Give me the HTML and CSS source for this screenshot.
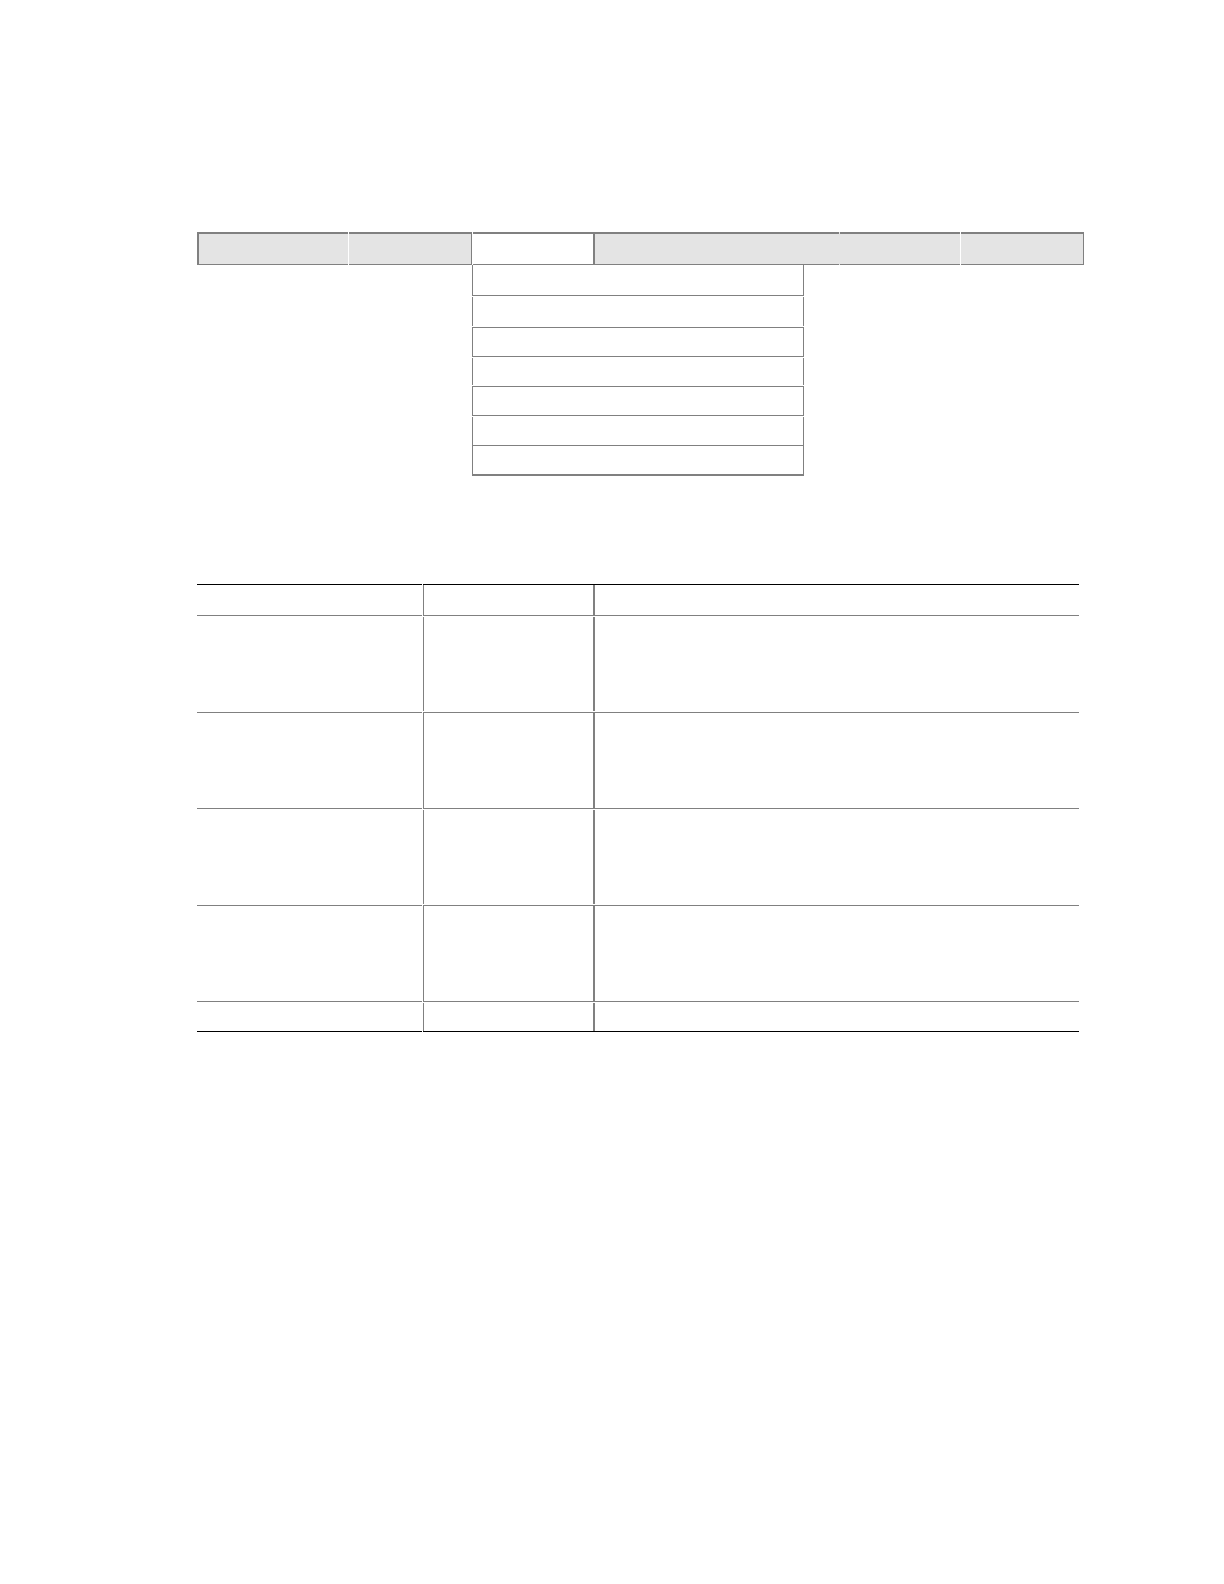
FILE: index.html
```html
<!DOCTYPE html>
<html lang="en">
<head>
<meta charset="utf-8">
<title>Menu</title>
<link rel="stylesheet" href="styles.css">
</head>
<body>
<main class="page">
  <nav class="bar">
    <div class="tab tab-first"></div>
    <div class="tab tab-closed tab-gap"></div>
    <div class="tab tab-open tab-gap"></div>
    <div class="tab tab-start"></div>
    <div class="tab tab-joined"></div>
    <div class="tab tab-closed tab-gap"></div>
  </nav>
  <ul class="menu">
    <li class="item item-top"></li>
    <li class="item item-plain"></li>
    <li class="item item-boxed"></li>
    <li class="item item-plain item-short"></li>
    <li class="item item-boxed"></li>
    <li class="item item-plain"></li>
    <li class="item item-last"></li>
  </ul>
  <table class="grid">
    <colgroup><col class="col-name"><col class="col-key"><col></colgroup>
    <thead>
      <tr class="row-head"><td></td><td></td><td></td></tr>
    </thead>
    <tbody>
      <tr class="row-plain"><td></td><td></td><td></td></tr>
      <tr class="row-ruled"><td></td><td></td><td></td></tr>
      <tr class="row-plain"><td></td><td></td><td></td></tr>
      <tr class="row-ruled"><td></td><td></td><td></td></tr>
      <tr class="row-last"><td></td><td></td><td></td></tr>
    </tbody>
  </table>
</main>
</body>
</html>
```
FILE: styles.css
```css
:root {
  --line: #808080;
  --fill: #e4e4e4;
}

* {
  box-sizing: border-box;
}

body {
  margin: 0;
  background: #fff;
  font-family: "Liberation Sans", sans-serif;
}

.page {
  min-height: 100vh;
  padding: 232px 140px 0 197px;
}

/* Menu bar */
.bar {
  display: grid;
  grid-template-columns: 151fr 124fr 121fr 246fr 121fr 124fr;
}

.tab {
  height: 33px;
  background: var(--fill);
  box-shadow: inset 0 2px var(--line), inset 0 -1px var(--line);
}

.tab-gap {
  margin-left: 1px;
}

.tab-first,
.tab-start {
  box-shadow: inset 0 2px var(--line), inset 0 -1px var(--line), inset 2px 0 var(--line);
}

.tab-closed {
  box-shadow: inset 0 2px var(--line), inset 0 -1px var(--line), inset -1px 0 var(--line);
}

.tab-open {
  background: #fff;
}

.tab-joined {
  border-left: 1px solid var(--fill);
}

/* Open menu */
.menu {
  display: flex;
  flex-direction: column;
  gap: 1px;
  width: 332px;
  margin: 0 0 107px 275px;
  padding: 0;
  list-style: none;
}

.item {
  height: 30px;
  border: 0 solid var(--line);
  border-width: 0 1px;
}

.item-top {
  height: 31px;
  border-bottom-width: 1px;
}

.item-boxed {
  border-width: 1px;
}

.item-plain {
  height: 29px;
}

.item-short {
  height: 27px;
}

.item-last {
  height: 31px;
  margin-top: -2px;
  border-width: 1px 1px 2px;
}

/* Table */
.grid {
  width: calc(100% - 5px);
  table-layout: fixed;
  border-collapse: separate;
  border-spacing: 0 1px;
}

.col-name {
  width: 226px;
}

.col-key {
  width: 170px;
}

.grid td {
  padding: 0;
  --above: inset 0 0 transparent;
  --below: inset 0 0 transparent;
  --side: inset 0 0 transparent;
  box-shadow: var(--above), var(--below), var(--side);
}

.grid td:first-child {
  border-right: 1px solid #fff;
}

.grid td:nth-child(2) {
  --side: inset 1px 0 var(--line);
}

.grid td:nth-child(3) {
  --side: inset 2px 0 var(--line);
}

.row-head td {
  height: 32px;
}

.grid .row-head td {
  --above: inset 0 1px #000;
  --below: inset 0 -1px var(--line);
}

.row-plain td {
  height: 94px;
}

.row-ruled td {
  height: 97px;
}

.grid .row-ruled td {
  --above: inset 0 1px var(--line);
  --below: inset 0 -1px var(--line);
}

.row-last td {
  height: 29px;
}

.grid .row-last td {
  --below: inset 0 -1px #000;
}
```
